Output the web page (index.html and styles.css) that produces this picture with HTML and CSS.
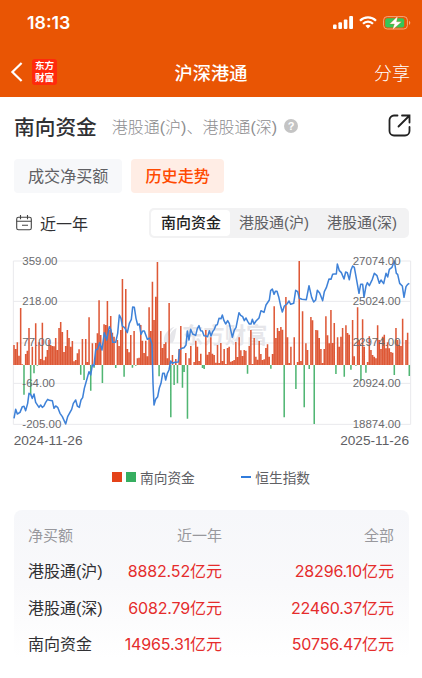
FILE: index.html
```
<!DOCTYPE html>
<html lang="zh-CN">
<head>
    <meta charset="UTF-8">
    <meta name="viewport" content="width=device-width, initial-scale=1.0">
    <title>沪深港通</title>
    <link rel="stylesheet" href="styles.css">
</head>
<body>
    <header>
        <div class="status-bar">
            <span class="time">18:13</span>
            <div class="status-icons">
                <svg width="20" height="13" viewBox="0 0 20 13" fill="#fff">
                    <rect x="0" y="8.5" width="3.6" height="4.5" rx="1"/>
                    <rect x="5.4" y="6.3" width="3.6" height="6.7" rx="1"/>
                    <rect x="10.8" y="3.5" width="3.6" height="9.5" rx="1"/>
                    <rect x="16.2" y="0" width="3.8" height="13" rx="1"/>
                </svg>
                <svg width="18" height="13" viewBox="0 0 18 13" fill="none" stroke="#fff" stroke-width="2.2">
                    <path d="M1 4.7C5.4 .2 12.6 .2 17 4.7"/>
                    <path d="M4 7.8c2.8-2.9 7.2-2.9 10 0"/>
                    <path d="M6.4 9.8c1.5-1.4 3.7-1.4 5.2 0L9 12.5z" fill="#fff" stroke="none"/>
                </svg>
                <svg width="28" height="14" viewBox="0 0 28 14">
                    <rect x=".6" y=".6" width="23.8" height="12.4" rx="3.6" fill="none" stroke="#f5a67c"/>
                    <rect x="2.2" y="2.2" width="19" height="9.2" rx="2" fill="#34c759"/>
                    <path d="M26 4.8c1.8.8 1.8 3.4 0 4.2z" fill="#f5a67c"/>
                    <path d="M14.8 0L6.600 8h4.800L9.400 14 18.600 5.800h-5z" fill="#fff" stroke="#e95504" stroke-width=".3"/>
                </svg>
            </div>
        </div>
        <div class="nav-bar">
            <div class="nav-left">
                <svg width="13" height="20" viewBox="0 0 13 20" fill="none" stroke="#fff" stroke-width="2.2">
                    <path d="M11.6 1L2.400 10l9.200 9"/>
                </svg>
                <div class="logo"><span>东方</span><span>财富</span></div>
            </div>
            <h1>沪深港通</h1>
            <span class="share">分享</span>
        </div>
    </header>

    <main>
        <div class="heading">
            <h2>南向资金</h2>
            <span class="sub">港股通(沪)、港股通(深)</span>
            <span class="help">?</span>
            <svg class="open" width="23" height="23" viewBox="0 0 23 23" fill="none" stroke="#222" stroke-width="1.8" stroke-linecap="round">
                <path d="M9.500 1.500H6a4.500 4.500 0 0 0-4.500 4.500v11A4.500 4.500 0 0 0 6 21.500h11a4.500 4.500 0 0 0 4.500-4.500v-4"/>
                <path d="M14 1.500h7.500V8.500M21 2L10.500 12.500"/>
            </svg>
        </div>

        <div class="tabs">
            <span class="tab">成交净买额</span>
            <span class="tab active">历史走势</span>
        </div>

        <div class="filters">
            <svg width="16" height="16" viewBox="0 0 16 16" fill="none" stroke="#444" stroke-width="1.1">
                <rect x=".7" y="2.200" width="14.600" height="12.600" rx="1.800"/>
                <path d="M4.500 0v4.200M11.500 0v4.200M.7 6.300h14.600M6 10.300h6"/>
            </svg>
            <span class="period">近一年</span>
            <div class="segment">
                <span class="option selected">南向资金</span>
                <span class="option">港股通(沪)</span>
                <span class="option">港股通(深)</span>
            </div>
        </div>

        <svg class="chart" width="422" height="200" viewBox="0 0 1266 600">
            <path class="grid" d="M40 33H1232M40 154H1232M40 279H1232M40 400H1232M40 523H1232M40 33V523M1232 33V523"/>
            <g class="watermark">
                <path d="M493 279c-6-20 8-42 31-49-16 14-22 30-19 48zM510 279c-5-20 2-38 20-45-4 15-3 31-12 44z"/>
                <text x="546" y="280">东方财富</text>
            </g>
            <path id="buy" class="buy"/>
            <path id="sell" class="sell"/>
            <polyline id="index" class="index"/>
            <g class="axis">
                <text x="67" y="45">359.00</text>
                <text x="67" y="166">218.00</text>
                <text x="67" y="289">77.00</text>
                <text x="67" y="411">-64.00</text>
                <text x="67" y="534">-205.00</text>
            </g>
            <g class="axis right">
                <text x="1202" y="45">27074.00</text>
                <text x="1202" y="166">25024.00</text>
                <text x="1202" y="289">22974.00</text>
                <text x="1202" y="411">20924.00</text>
                <text x="1202" y="534">18874.00</text>
            </g>
            <text class="date" x="41" y="585">2024-11-26</text>
            <text class="date right" x="1227" y="585">2025-11-26</text>
        </svg>

        <div class="legend">
            <span class="square red"></span>
            <span class="square green"></span>
            <span class="name">南向资金</span>
            <span class="dash"></span>
            <span class="name">恒生指数</span>
        </div>

        <div class="summary">
            <div class="row head"><span>净买额</span><span>近一年</span><span>全部</span></div>
            <div class="row"><span>港股通(沪)</span><span class="num">8882.52<b>亿元</b></span><span class="num">28296.10<b>亿元</b></span></div>
            <div class="row"><span>港股通(深)</span><span class="num">6082.79<b>亿元</b></span><span class="num">22460.37<b>亿元</b></span></div>
            <div class="row"><span>南向资金</span><span class="num">14965.31<b>亿元</b></span><span class="num">50756.47<b>亿元</b></span></div>
        </div>
    </main>

    <script src="chart.js"></script>
</body>
</html>
```
FILE: styles.css
```
* {
    box-sizing: border-box;
}

body {
    margin: 0;
    width: 422px;
    height: 678px;
    overflow: hidden;
    background: #fff;
    font-family: "Liberation Sans", "Noto Sans CJK SC", sans-serif;
    color: #303033;
}

header {
    height: 97px;
    background: #e95504;
    color: #fff;
}

.status-bar {
    display: flex;
    justify-content: space-between;
    align-items: center;
    height: 45px;
    padding: 0 11px 0 27px;
}

.time {
    font-family: Inter, sans-serif;
    font-size: 17.8px;
    font-weight: 600;
}

.status-icons {
    display: flex;
    align-items: center;
    gap: 6px;
}

.nav-bar {
    display: grid;
    grid-template-columns: 1fr auto 1fr;
    align-items: center;
    height: 52px;
    padding: 2px 12px 0 10px;
}

.nav-left {
    display: flex;
    align-items: center;
    gap: 9px;
}

.logo {
    display: flex;
    flex-direction: column;
    align-items: center;
    gap: 3px;
    width: 25px;
    height: 26px;
    padding-top: 2px;
    border-radius: 3px;
    background: #ff2a0c;
    font-family: "Noto Sans CJK SC", sans-serif;
    font-size: 9.6px;
    font-weight: 700;
    line-height: 9px;
}

h1 {
    margin: 0 0 0 2px;
    font-size: 18.2px;
    font-weight: 500;
}

.share {
    font-size: 18px;
    font-weight: 300;
    text-align: right;
}

.heading {
    display: flex;
    align-items: center;
    height: 57px;
    padding: 0 11px 0 14px;
}

h2 {
    margin: 0 15px 0 0;
    font-size: 20.7px;
    font-weight: 500;
}

.sub {
    font-size: 16px;
    font-weight: 300;
    color: #8d8d8f;
}

.help {
    width: 14px;
    height: 14px;
    margin-left: 7px;
    border-radius: 50%;
    background: #c4c4c4;
    color: #fff;
    font-size: 11px;
    font-weight: 700;
    line-height: 14px;
    text-align: center;
}

.open {
    margin-left: auto;
}

.tabs {
    display: flex;
    gap: 9px;
    padding: 5px 14px 0;
}

.tab {
    height: 34px;
    padding: 0 14px;
    border-radius: 4px;
    background: #f7f8fa;
    color: #606064;
    font-size: 16.1px;
    line-height: 34px;
}

.tab.active {
    background: #ffede5;
    color: #ff4a00;
    font-weight: 500;
}

.filters {
    display: flex;
    align-items: center;
    height: 30px;
    margin-top: 15px;
    padding: 0 13px 0 16px;
}

.period {
    margin-left: 8px;
    font-size: 16px;
}

.segment {
    display: flex;
    width: 260px;
    height: 30px;
    margin-left: auto;
    padding: 2px;
    border-radius: 5px;
    background: #f2f2f3;
}

.option {
    padding: 0 9px;
    border-radius: 4px;
    color: #606064;
    font-size: 15px;
    line-height: 26px;
    white-space: nowrap;
}

.option.selected {
    padding: 0 9px 0 10px;
    background: #fff;
    color: #222;
    font-weight: 500;
}

.chart {
    display: block;
    margin-top: 12px;
}

.grid {
    fill: none;
    stroke: #e9e9ec;
    stroke-width: 3;
}

.watermark {
    fill: #e6e6ea;
    font-size: 64px;
    font-weight: 700;
}

.buy {
    stroke: #dc4a26;
    stroke-width: 4.6;
    opacity: 0.92;
}

.sell {
    stroke: #42b068;
    stroke-width: 4.6;
    opacity: 0.92;
}

.index {
    fill: none;
    stroke: #3f82d8;
    stroke-width: 4.6;
    stroke-linejoin: round;
}

.axis {
    fill: #6b6b6e;
    font-size: 34.5px;
}

.date {
    fill: #606064;
    font-size: 41px;
}

.right {
    text-anchor: end;
}

.legend {
    display: flex;
    align-items: center;
    height: 20px;
    margin-top: 17px;
    padding-left: 112px;
    color: #606064;
    font-size: 13.7px;
}

.square {
    width: 9.500px;
    height: 9.500px;
    margin-right: 4.500px;
}

.red {
    background: #e44319;
}

.green {
    background: #36ae60;
}

.dash {
    width: 10px;
    height: 2px;
    margin: 0 4.500px 0 46px;
    background: #307bdc;
}

.summary {
    height: 149px;
    margin: 23px 13px 0 14px;
    padding: 6px 15px 0 14px;
    border-radius: 8px;
    background: linear-gradient(#f6f7fa, #f9f9fb 50%, #fff);
}

.row {
    display: grid;
    grid-template-columns: 90px 104px 1fr;
    align-items: center;
    height: 36.500px;
    font-size: 16px;
    white-space: nowrap;
}

.row span + span {
    text-align: right;
}

.head {
    height: 36px;
    color: #98989d;
    font-size: 15px;
}

.num {
    color: #e52c2c;
    font-family: Inter, "Noto Sans CJK SC", sans-serif;
    letter-spacing: -0.160px;
}

.num b {
    font-weight: 400;
    letter-spacing: 0;
}
```
FILE: chart.js
```
// one entry per trading day: end of the bar, measured on the chart grid
const zero = 345;
const flow = [
    285, 297, 277, 317, 174, 343, 434, 312, 302, 234, 434, 290, 370, 220, 347, 277, 327, 218, 331, 320,
    300, 270, 285, 288, 289, 264, 300, 234, 216, 246, 306, 288, 240, 264, 290, 273, 334, 330, 310, 298,
    374, 267, 390, 267, 336, 202, 422, 280, 353, 279, 250, 151, 255, 399, 223, 225, 153, 240, 198, 248,
    260, 354, 270, 288, 240, 87, 380, 117, 297, 307, 255, 353, 243, 347, 325, 323, 225, 272, 309, 272,
    319, 172, 243, 95, 210, 140, 36, 379, 243, 294, 282, 277, 325, 159, 502, 315, 405, 327, 400, 297,
    228, 413, 366, 309, 506, 325, 288, 345, 336, 272, 290, 333, 311, 354, 357, 240, 314, 306, 262, 311,
    315, 338, 285, 339, 279, 333, 297, 342, 294, 290, 335, 333, 330, 276, 321, 262, 301, 318, 300, 302,
    371, 288, 240, 342, 264, 320, 329, 273, 312, 330, 328, 294, 283, 320, 356, 312, 169, 264, 234, 243,
    231, 239, 502, 141, 262, 339, 290, 345, 262, 417, 336, 33, 333, 184, 472, 280, 300, 357, 201, 211,
    522, 240, 241, 264, 297, 339, 297, 199, 256, 280, 180, 279, 219, 372, 262, 290, 260, 234, 380, 226,
    249, 254, 359, 210, 319, 347, 172, 270, 393, 208, 290, 368, 336, 259, 300, 315, 320, 325, 226, 270,
    297, 260, 254, 295, 277, 295, 306, 308, 375, 234, 270, 285, 288, 206, 345, 270, 248, 378
];

let buy = '';
let sell = '';
flow.forEach((y, i) => {
    const bar = `M${(42 + i * 5.004).toFixed(1)} ${zero}V${y}`;
    if (y < zero) buy += bar;
    if (y > zero) sell += bar;
});
document.getElementById('buy').setAttribute('d', buy);
document.getElementById('sell').setAttribute('d', sell);

// Hang Seng Index
const points = `42,505 47,478 52,492 60,487 67,470 72,469 77,482 83,460 87,430 92,433 97,445 102,432 107,457
117,472 122,465 127,472 132,468 137,457 143,448 148,451 157,452 162,475 167,468 173,472 180,490 187,500
197,522 203,500 210,487 215,478 220,460 227,450 232,468 238,472 243,450 248,443 253,415 260,390 267,365
272,375 277,345 282,347 287,300 293,297 299,278 306,300 313,248 320,270 328,230 333,240 338,277 347,277
353,250 358,195 363,205 367,228 374,233 382,248 388,220 394,208 398,171 403,172 408,205 413,225 418,222
423,253 428,243 433,243 442,268 450,264 456,283 459,400 462,465 467,448 473,440 478,414 483,400 488,370
493,370 497,390 502,370 507,360 512,333 517,340 525,337 535,336 538,300 545,295 552,293 558,285 562,243
567,270 572,238 578,252 587,256 592,236 597,227 602,242 607,243 612,257 618,258 623,260 628,242 633,258
638,245 643,238 648,225 652,224 657,205 663,206 667,195 672,212 677,222 683,212 688,221 697,262 703,240
708,233 717,188 722,196 728,200 733,212 738,204 743,214 748,222 753,222 757,208 762,222 768,213 777,204
783,182 792,187 798,165 808,150 812,122 817,117 822,133 826,124 831,124 836,140 843,172 847,186 853,168
861,162 867,153 872,163 881,160 887,121 893,125 898,145 906,148 919,149 927,107 935,142 941,156 947,150
952,121 959,129 968,152 973,125 979,113 987,87 993,88 998,73 1003,72 1009,72 1012,42 1018,62 1024,68
1032,87 1037,66 1042,68 1048,89 1053,60 1058,48 1063,52 1069,85 1077,130 1082,103 1088,103 1092,142
1098,108 1102,98 1108,107 1117,88 1123,70 1131,77 1138,100 1143,90 1151,101 1158,70 1163,81 1168,58
1176,52 1183,33 1189,70 1193,73 1199,100 1207,108 1212,142 1218,110 1223,103 1228,100`;
document.getElementById('index').setAttribute('points', points);
```
